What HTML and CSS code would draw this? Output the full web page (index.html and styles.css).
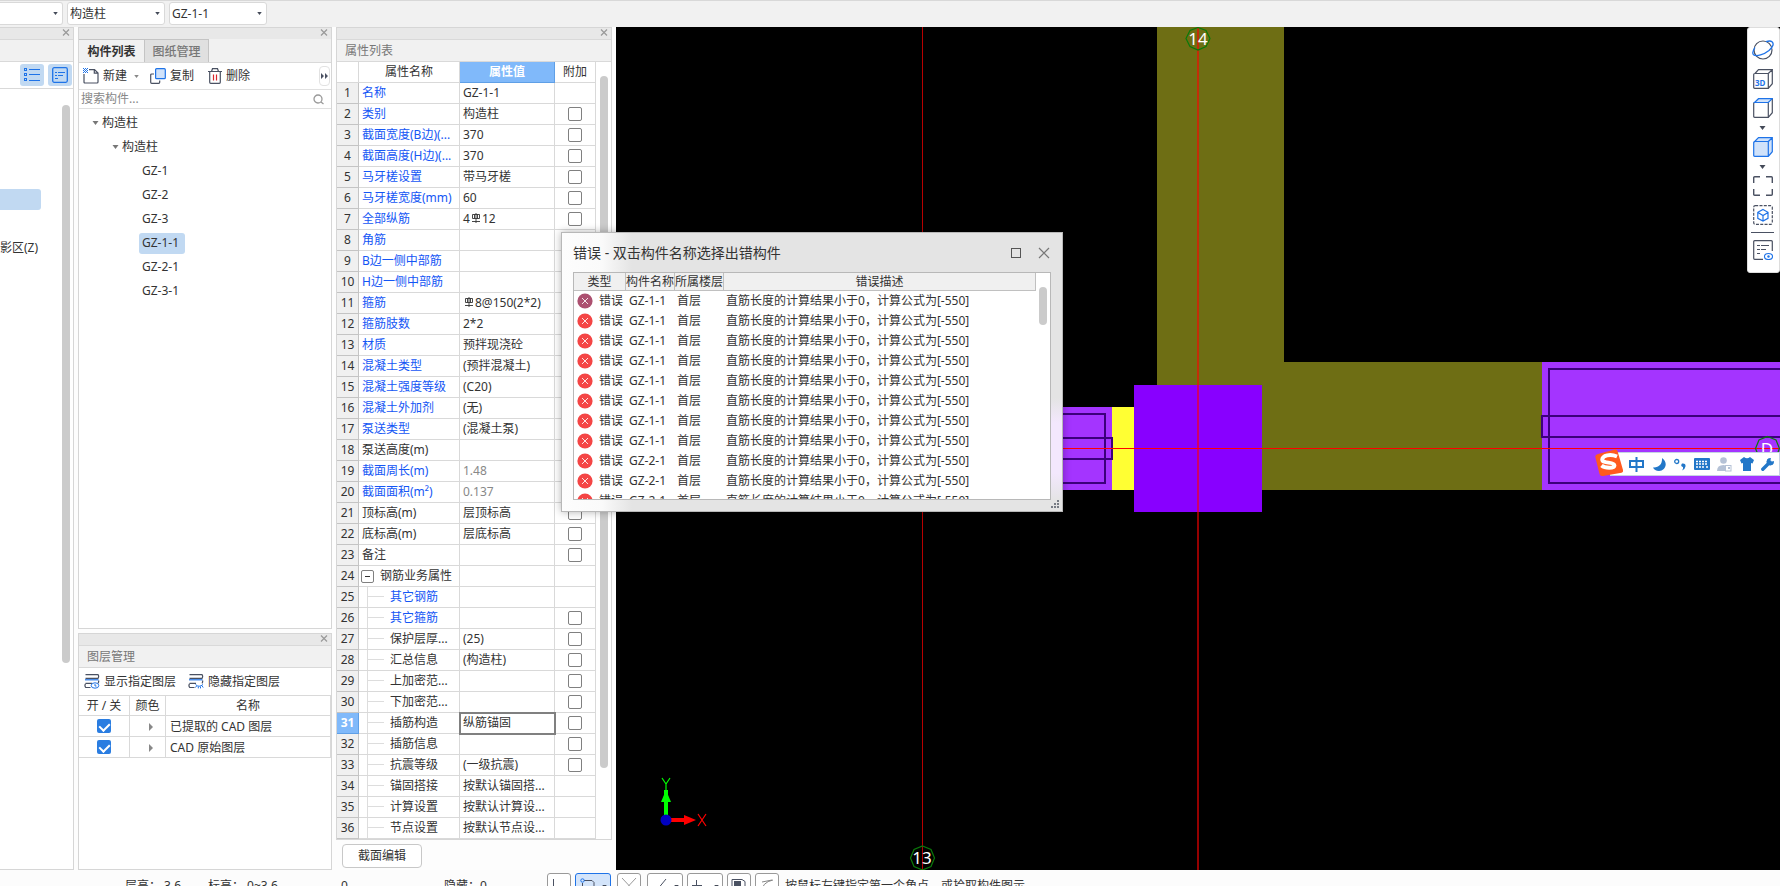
FILE: index.html
```html
<!DOCTYPE html>
<html lang="zh-CN">
<head>
<meta charset="utf-8">
<title>构件属性</title>
<link rel="stylesheet" href="styles.css">
</head>
<body>
<svg class="defs" aria-hidden="true">
  <symbol id="x" viewBox="0 0 8 8"><path d="M1 1l6 6M7 1l-6 6" fill="none" stroke="currentColor" stroke-width="1.2"/></symbol>
  <symbol id="rebar" viewBox="0 0 10 10"><path d="M5 0v10M1 8.500h8M1.500 1.500h7v4h-7zM3.500 1.500v4M6.500 1.500v4" fill="none" stroke="#333" stroke-width=".9"/></symbol>
  <symbol id="err" viewBox="0 0 16 16"><circle cx="8" cy="8" r="7.600" fill="currentColor"/><path d="M5 5l6 6M11 5l-6 6" stroke="#fff" stroke-opacity=".85" fill="none"/></symbol>
  <symbol id="tri" viewBox="0 0 6 4"><path d="M0 0h6L3 4z" fill="currentColor"/></symbol>
  <symbol id="layers" viewBox="0 0 16 15"><g fill="none" stroke="#4a5162" stroke-width="1.200"><path d="M1.500 .7H14q1.300 1.800 0 3.600H1.500M14 9.300q1-1.300.5-2.800M1.500 9.300h6.500M6.500 13.500H1.700Q.3 11.500 1.500 9.800"/></g><path d="M1 5.800h13.500" stroke="#1e73e8" stroke-width="1.200" fill="none"/></symbol>
</svg>

<header class="topbar">
  <span class="combo combo-first"><select aria-label="类型"><option></option></select><svg class="tri"><use href="#tri"/></svg></span>
  <span class="combo"><select aria-label="构件类型"><option>构造柱</option></select><svg class="tri"><use href="#tri"/></svg></span>
  <span class="combo"><select aria-label="构件"><option>GZ-1-1</option></select><svg class="tri"><use href="#tri"/></svg></span>
</header>

<main class="work">
  <section class="panel nav">
    <div class="grip"><button aria-label="关闭"><svg><use href="#x"/></svg></button></div>
    <div class="head"></div>
    <div class="nav-tools">
      <button aria-label="列表"><svg width="16" height="14" viewBox="0 0 16 14" fill="none" stroke="#1e73e8"><rect x=".5" y=".5" width="2" height="2"/><rect x=".5" y="5.500" width="2" height="2"/><rect x=".5" y="10.500" width="2" height="2"/><path d="M5 1.500h11M5 6.500h11M5 12.500h11"/></svg></button>
      <button aria-label="详情"><svg width="16" height="16" viewBox="0 0 16 16" fill="none" stroke="#1e73e8"><rect x=".7" y=".7" width="14.600" height="14.600" rx="1.500" stroke-width="1.300"/><path d="M3 5.500h2M6 5.500h7M3 8.500h2M6 8.500h5M3 11.500h3"/></svg></button>
    </div>
    <div class="nav-body">
      <div class="nav-list"><div class="nav-sel"></div><div class="nav-item">影区(Z)</div></div>
      <div class="nav-track"><div class="thumb"></div></div>
    </div>
  </section>

  <div class="column">
    <section class="panel comps">
      <div class="grip"><button aria-label="关闭"><svg><use href="#x"/></svg></button></div>
      <div class="head tabs"><button class="tab on">构件列表</button><button class="tab">图纸管理</button></div>
      <div class="tools">
        <button><svg width="16" height="16" viewBox="0 0 16 16" fill="none"><path d="M6 1.600h5.500l3.500 3.500v8.900q0 1-1 1H2q-1 0-1-1V6M11.300 1.600v3.600H15" stroke="#4a5162" stroke-width="1.200"/><path d="M0 0h1v1H0zM2 0h1v1H2zM4 0h1v1H4zM1 1h1v1H1zM3 1h1v1H3zM0 2h1v1H0zM2 2h1v1H2zM4 2h1v1H4zM1 3h1v1H1zM3 3h1v1H3zM0 4h1v1H0zM2 4h1v1H2zM4 4h1v1H4z" fill="#1e73e8"/></svg>新建</button>
        <svg class="tri gray"><use href="#tri"/></svg>
        <button class="copy"><svg width="16" height="16" viewBox="0 0 16 16"><rect x="5.600" y=".7" width="9.700" height="10" rx="1" fill="#d0e2fa" stroke="#1e73e8" stroke-width="1.200"/><path d="M4 6H1.700q-1 0-1 1v7.300q0 1 1 1h7q1 0 1-1V12.500" fill="none" stroke="#4a5162" stroke-width="1.200"/></svg>复制</button>
        <button class="del"><svg width="14" height="16" viewBox="0 0 14 16" fill="none"><path d="M0 3.500h14M3.500 3.500L4.500.7h5l1 2.800M1.700 3.500v10.800q0 1 1 1h8.600q1 0 1-1V3.500" stroke="#4a5162" stroke-width="1.200"/><path d="M5.500 6.500v6M8.500 6.500v6" stroke="#d9262c" stroke-width="1.200"/></svg>删除</button>
        <button class="more" aria-label="更多"><svg width="7" height="6" viewBox="0 0 7 6"><path d="M0 0l3 3-3 3zM4 0l3 3-3 3z" fill="#4a5162"/></svg></button>
      </div>
      <div class="search"><input type="text" placeholder="搜索构件..." aria-label="搜索构件"><svg width="11" height="11" viewBox="0 0 11 11" fill="none" stroke="#999" stroke-width="1.300"><circle cx="5" cy="5" r="4"/><path d="M8 8l2.500 2"/></svg></div>
      <ul class="tree">
        <li class="l1"><svg class="tri"><use href="#tri"/></svg>构造柱</li>
        <li class="l2"><svg class="tri"><use href="#tri"/></svg>构造柱</li>
        <li class="l3"><span>GZ-1</span></li>
        <li class="l3"><span>GZ-2</span></li>
        <li class="l3"><span>GZ-3</span></li>
        <li class="l3"><span class="sel">GZ-1-1</span></li>
        <li class="l3"><span>GZ-2-1</span></li>
        <li class="l3"><span>GZ-3-1</span></li>
      </ul>
    </section>
    <section class="panel layers">
      <div class="grip"><button aria-label="关闭"><svg><use href="#x"/></svg></button></div>
      <h2 class="head">图层管理</h2>
      <div class="layer-tools">
        <button><svg width="16" height="15" viewBox="0 0 16 15"><use href="#layers"/><ellipse cx="11" cy="11.500" rx="3.800" ry="2.700" fill="#fff" stroke="#1e73e8"/><path d="M11 10v2h1.500" stroke="#1e73e8" fill="none"/></svg>显示指定图层</button>
        <button><svg width="16" height="15" viewBox="0 0 16 15"><use href="#layers"/><path d="M7.500 10.500q3.500 3.500 7.500 0M8.500 12l-1 1.500M10.300 12.600v1.800M12.500 12.600v1.800M14.200 12l1 1.500" stroke="#1e73e8" fill="none"/></svg>隐藏指定图层</button>
      </div>
      <table class="layer-table">
        <colgroup><col class="c-on"><col class="c-color"><col></colgroup>
        <thead><tr><th>开 / 关</th><th>颜色</th><th>名称</th></tr></thead>
        <tbody>
          <tr><td class="mid"><input type="checkbox" id="ly1" checked></td><td class="mid"><svg class="play" width="4" height="8" viewBox="0 0 4 8"><path d="M0 0l4 4-4 4z" fill="#888"/></svg></td><td><label for="ly1">已提取的 CAD 图层</label></td></tr>
          <tr><td class="mid"><input type="checkbox" id="ly2" checked></td><td class="mid"><svg class="play" width="4" height="8" viewBox="0 0 4 8"><path d="M0 0l4 4-4 4z" fill="#888"/></svg></td><td><label for="ly2">CAD 原始图层</label></td></tr>
        </tbody>
      </table>
    </section>
  </div>

  <div class="props">
    <section class="panel props-panel">
      <div class="grip"><button aria-label="关闭"><svg><use href="#x"/></svg></button></div>
      <h2 class="head">属性列表</h2>
      <div class="props-body">
        <table class="prop-table">
          <colgroup><col class="p-num"><col class="p-name"><col class="p-val"><col class="p-add"></colgroup>
          <thead><tr><th></th><th>属性名称</th><th class="hot">属性值</th><th>附加</th></tr></thead>
          <tbody>
            <tr><th>1</th><td class="b">名称</td><td>GZ-1-1</td><td></td></tr>
            <tr><th>2</th><td class="b">类别</td><td>构造柱</td><td><input type="checkbox" aria-label="附加 类别"></td></tr>
            <tr><th>3</th><td class="b">截面宽度(B边)(...</td><td>370</td><td><input type="checkbox" aria-label="附加 截面宽度"></td></tr>
            <tr><th>4</th><td class="b">截面高度(H边)(...</td><td>370</td><td><input type="checkbox" aria-label="附加 截面高度"></td></tr>
            <tr><th>5</th><td class="b">马牙槎设置</td><td>带马牙槎</td><td><input type="checkbox" aria-label="附加 马牙槎设置"></td></tr>
            <tr><th>6</th><td class="b">马牙槎宽度(mm)</td><td>60</td><td><input type="checkbox" aria-label="附加 马牙槎宽度"></td></tr>
            <tr><th>7</th><td class="b">全部纵筋</td><td>4<svg class="rebar"><use href="#rebar"/></svg>12</td><td><input type="checkbox" aria-label="附加 全部纵筋"></td></tr>
            <tr><th>8</th><td class="b">角筋</td><td></td><td></td></tr>
            <tr><th>9</th><td class="b">B边一侧中部筋</td><td></td><td></td></tr>
            <tr><th>10</th><td class="b">H边一侧中部筋</td><td></td><td></td></tr>
            <tr><th>11</th><td class="b">箍筋</td><td><svg class="rebar"><use href="#rebar"/></svg>8@150(2*2)</td><td></td></tr>
            <tr><th>12</th><td class="b">箍筋肢数</td><td>2*2</td><td></td></tr>
            <tr><th>13</th><td class="b">材质</td><td>预拌现浇砼</td><td></td></tr>
            <tr><th>14</th><td class="b">混凝土类型</td><td>(预拌混凝土)</td><td></td></tr>
            <tr><th>15</th><td class="b">混凝土强度等级</td><td>(C20)</td><td></td></tr>
            <tr><th>16</th><td class="b">混凝土外加剂</td><td>(无)</td><td></td></tr>
            <tr><th>17</th><td class="b">泵送类型</td><td>(混凝土泵)</td><td></td></tr>
            <tr><th>18</th><td>泵送高度(m)</td><td></td><td></td></tr>
            <tr><th>19</th><td class="b">截面周长(m)</td><td class="g">1.48</td><td></td></tr>
            <tr><th>20</th><td class="b">截面面积(m²)</td><td class="g">0.137</td><td></td></tr>
            <tr><th>21</th><td>顶标高(m)</td><td>层顶标高</td><td><input type="checkbox" aria-label="附加 顶标高"></td></tr>
            <tr><th>22</th><td>底标高(m)</td><td>层底标高</td><td><input type="checkbox" aria-label="附加 底标高"></td></tr>
            <tr><th>23</th><td>备注</td><td></td><td><input type="checkbox" aria-label="附加 备注"></td></tr>
            <tr><th>24</th><td class="group"><button class="fold" aria-label="折叠"></button>钢筋业务属性</td><td></td><td></td></tr>
            <tr><th>25</th><td class="sub b">其它钢筋</td><td></td><td></td></tr>
            <tr><th>26</th><td class="sub b">其它箍筋</td><td></td><td><input type="checkbox" aria-label="附加 其它箍筋"></td></tr>
            <tr><th>27</th><td class="sub">保护层厚...</td><td>(25)</td><td><input type="checkbox" aria-label="附加 保护层厚"></td></tr>
            <tr><th>28</th><td class="sub">汇总信息</td><td>(构造柱)</td><td><input type="checkbox" aria-label="附加 汇总信息"></td></tr>
            <tr><th>29</th><td class="sub">上加密范...</td><td></td><td><input type="checkbox" aria-label="附加 上加密范"></td></tr>
            <tr><th>30</th><td class="sub">下加密范...</td><td></td><td><input type="checkbox" aria-label="附加 下加密范"></td></tr>
            <tr><th class="hot">31</th><td class="sub">插筋构造</td><td class="cur">纵筋锚固</td><td><input type="checkbox" aria-label="附加 插筋构造"></td></tr>
            <tr><th>32</th><td class="sub">插筋信息</td><td></td><td><input type="checkbox" aria-label="附加 插筋信息"></td></tr>
            <tr><th>33</th><td class="sub">抗震等级</td><td>(一级抗震)</td><td><input type="checkbox" aria-label="附加 抗震等级"></td></tr>
            <tr><th>34</th><td class="sub">锚固搭接</td><td>按默认锚固搭...</td><td></td></tr>
            <tr><th>35</th><td class="sub">计算设置</td><td>按默认计算设...</td><td></td></tr>
            <tr><th>36</th><td class="sub">节点设置</td><td>按默认节点设...</td><td></td></tr>
            <tr><th></th><td class="sub"></td><td></td><td></td></tr>
          </tbody>
        </table>
        <div class="track"><div class="thumb"></div></div>
      </div>
    </section>
    <div class="props-foot"><button>截面编辑</button></div>
  </div>

  <section class="canvas">
    <svg class="drawing" aria-label="平面图">
      <path d="M541 0h127v335h258v128H541z" fill="#6e6e14"/>
      <rect x="300" y="380" width="196" height="83" fill="#a434ff"/>
      <rect x="496" y="380" width="22" height="83" fill="#ffff33"/>
      <rect x="926" y="335" width="2000" height="128" fill="#a434ff"/>
      <g fill="none" stroke="#3c007c" stroke-width="2">
        <path d="M300 387h189v69H300M300 411h196v21H300"/>
        <path d="M2900 342H933v114h1967M2900 389H926v21h1974"/>
      </g>
      <rect x="518" y="358" width="128" height="127" fill="#8800ff"/>
      <path d="M306.500 0v843" stroke="#b80000"/>
      <path d="M582 0v843" stroke="#f00" stroke-opacity=".58" stroke-width="2"/>
      <path d="M300 421.500h2600" stroke="#f00"/>
      <g fill="none" stroke="#0a7a0a" stroke-width="1.200">
        <path d="M582 0.500l8 3 4 8-4 8-8 3.500-8-3.500-4-8 4-8z"/>
        <path d="M306.500 819l8.500 3.500 3.500 8.500-3.500 8.500-8.500 3.500-8.500-3.500-3.500-8.500 3.500-8.500z"/>
        <path d="M1151.500 409.500l8.500 3.500 3.500 8.500-3.500 8.500-8.500 3.500-8.500-3.500-3.500-8.500 3.500-8.500z"/>
      </g>
      <g class="axis-no"><text x="582" y="18">14</text><text x="306" y="837">13</text><text x="1151" y="428">D</text></g>
      <path d="M50 790v-27" stroke="#0f0" stroke-width="4"/><path d="M50 763l-5 12h10z" fill="#0f0"/>
      <path d="M54 793h18" stroke="#f00" stroke-width="4"/><path d="M80 793l-12-5v10z" fill="#f00"/>
      <circle cx="50" cy="793" r="5.500" fill="#0000c0"/>
      <path d="M46 751l4 6 4-6M50 757v6" stroke="#0f0" fill="none" stroke-width="1.200"/>
      <path d="M82 787l8 12M90 787l-8 12" stroke="#f00" fill="none" stroke-width="1.200"/>
    </svg>

    <nav class="viewbar">
      <button aria-label="动态观察"><svg width="22" height="20" viewBox="0 0 22 20" fill="none"><circle cx="11" cy="10" r="9" stroke="#4a5162" stroke-width="1.200"/><path d="M3 7.500Q-.5 12.500 1.500 14.800C4.500 17 12 14.500 17 10.500 21.500 6.500 22 3.500 20 1.700 18.500.5 15.500 1.200 14 1.700" stroke="#1e73e8" stroke-width="1.300"/></svg></button>
      <button aria-label="三维"><svg width="20" height="20" viewBox="0 0 20 20" fill="none"><path d="M.7 5.500q0-1 1-1h13.600v14.800H1.700q-1 0-1-1zM2 4.500L5.500.7h13.800L15.300 4.500M19.300.7v14l-4 4.600" stroke="#4a5162" stroke-width="1.200"/><text x="2" y="17" class="t3d">3D</text></svg></button>
      <button aria-label="俯视"><svg width="20" height="20" viewBox="0 0 20 20" fill="none"><path d="M.7 5.500q0-1 1-1h13.600v14.800H1.700q-1 0-1-1zM19.300.7v14l-4 4.600" stroke="#4a5162" stroke-width="1.200"/><path d="M1.500 4.500L5.500.7h13.800L15.300 4.500z" fill="#d0e2fa" stroke="#1e73e8" stroke-width="1.200"/></svg></button>
      <svg class="tri"><use href="#tri"/></svg>
      <button aria-label="实体"><svg width="20" height="20" viewBox="0 0 20 20"><path d="M.7 5.500L5.500.7h13.800v14l-4 4.600H1.700q-1 0-1-1zM.7 4.500h14.600v14.800M15.300 4.500L19.300.7" fill="#d0e2fa" stroke="#1e73e8" stroke-width="1.200"/></svg></button>
      <svg class="tri"><use href="#tri"/></svg>
      <button aria-label="全屏"><svg width="20" height="20" viewBox="0 0 20 20" fill="none" stroke="#4a5162" stroke-width="1.400"><path d="M.7 7V1.700q0-1 1-1H7M13 .7h5.300q1 0 1 1V7M19.300 13v5.300q0 1-1 1H13M7 19.300H1.700q-1 0-1-1V13"/></svg></button>
      <button aria-label="局部三维"><svg width="20" height="20" viewBox="0 0 20 20" fill="none"><rect x=".7" y=".7" width="18.600" height="18.600" rx="1.500" stroke="#4a5162" stroke-width="1.200" stroke-dasharray="3 1.300"/><path d="M10 4.500l5 2.800v6L10 16l-5.200-2.700v-6zM5 7.500l5 3 5-3M10 10.500V16" stroke="#1e73e8" stroke-width="1.200"/></svg></button>
      <hr>
      <button aria-label="显示设置"><svg width="20" height="20" viewBox="0 0 20 20" fill="none"><path d="M19.300 11V1.700q0-1-1-1H1.700q-1 0-1 1v16.600q0 1 1 1H10M4 5.500h3M8 5.500h8M4 9.500h3M8 9.500h5M4 13.500h3" stroke="#4a5162" stroke-width="1.200"/><ellipse cx="15.500" cy="16.500" rx="4" ry="3" stroke="#1e73e8" stroke-width="1.100"/><circle cx="15.500" cy="16.500" r="1.200" fill="#1e73e8"/></svg></button>
    </nav>

    <div class="ime">
      <svg class="ime-logo" viewBox="0 0 28 28"><path d="M3 5L20 .5q2-.5 2.500 1.500L28 21q.5 2-1.500 2.700L8 27q-3 .5-3.500-2L.3 8Q0 5.700 3 5z" fill="#ff5a1f"/><path d="M22 7.500C15 4.500 7.500 6.500 7.200 10.500 7 15 19.500 12.500 19.500 16.500 19.300 19.500 10 19.500 6.500 16.500" fill="none" stroke="#fff" stroke-width="3.800"/></svg>
      <svg width="15" height="15" viewBox="0 0 15 15" fill="none" stroke="#2277c8" stroke-width="2"><path d="M1 4h13v6H1zM7.500 0v15"/></svg>
      <svg width="15" height="15" viewBox="0 0 15 15"><path d="M10 1C17 6 13 14 7 14 4 14 2 12.500 1 10.500 7 11 10.500 7 10 1z" fill="#2277c8"/></svg>
      <svg width="12" height="13" viewBox="0 0 12 13"><circle cx="2.700" cy="3.500" r="2" fill="none" stroke="#2277c8" stroke-width="1.300"/><path d="M8 5.500q4-.5 3.500 3-.5 3-3.500 4 1.500-2 1-3.500Q6 8 8 5.500z" fill="#2277c8"/></svg>
      <svg width="16" height="12" viewBox="0 0 16 12"><rect width="16" height="12" rx="1" fill="#2277c8"/><path d="M2 3.500h12M2 6h12M2 9h2M5 9h6M12 9h2" stroke="#fff" stroke-width="1.300" stroke-dasharray="2 1"/></svg>
      <svg width="15" height="15" viewBox="0 0 15 15" fill="#b5c2d6"><circle cx="6.500" cy="3.500" r="3.300"/><path d="M0 14q0-6 6.500-6 5 0 5.500 6z"/><rect x="8.500" y="8.500" width="5.500" height="5.500" fill="#fff" stroke="#b5c2d6"/><path d="M11 10h2v2h-2z"/></svg>
      <svg width="14" height="14" viewBox="0 0 14 14"><path d="M4 0q3 2.500 6 0l4 3-1.500 3.500L11 6v8H3V6l-1.500.5L0 3z" fill="#2277c8"/></svg>
      <svg width="14" height="14" viewBox="0 0 14 14"><path d="M1.800 12.200L9 5" stroke="#2277c8" stroke-width="3.400" stroke-linecap="round"/><path d="M12.500 4.500A3.300 3.300 0 119.500 1.500L8.500 4l1.500 1.500z" fill="#2277c8" stroke="#2277c8"/></svg>
    </div>
  </section>

  <section class="dialog" role="dialog" aria-labelledby="dlg-title">
    <div class="dlg-head">
      <h1 id="dlg-title">错误 - 双击构件名称选择出错构件</h1>
      <button aria-label="最大化"><svg width="10" height="10" viewBox="0 0 10 10"><rect x=".5" y=".5" width="9" height="9" fill="none" stroke="#555"/></svg></button>
      <button aria-label="关闭"><svg width="12" height="12" viewBox="0 0 12 12"><path d="M1 1l10 10M11 1L1 11" stroke="#777" stroke-width="1.200"/></svg></button>
    </div>
    <div class="dlg-body">
      <table>
        <colgroup><col class="e-type"><col class="e-name"><col class="e-name"><col></colgroup>
        <thead><tr><th>类型</th><th>构件名称</th><th>所属楼层</th><th>错误描述</th></tr></thead>
        <tbody>
          <tr><td class="hit"><svg><use href="#err"/></svg>错误</td><td>GZ-1-1</td><td>首层</td><td>直筋长度的计算结果小于0，计算公式为[-550]</td></tr>
          <tr><td><svg><use href="#err"/></svg>错误</td><td>GZ-1-1</td><td>首层</td><td>直筋长度的计算结果小于0，计算公式为[-550]</td></tr>
          <tr><td><svg><use href="#err"/></svg>错误</td><td>GZ-1-1</td><td>首层</td><td>直筋长度的计算结果小于0，计算公式为[-550]</td></tr>
          <tr><td><svg><use href="#err"/></svg>错误</td><td>GZ-1-1</td><td>首层</td><td>直筋长度的计算结果小于0，计算公式为[-550]</td></tr>
          <tr><td><svg><use href="#err"/></svg>错误</td><td>GZ-1-1</td><td>首层</td><td>直筋长度的计算结果小于0，计算公式为[-550]</td></tr>
          <tr><td><svg><use href="#err"/></svg>错误</td><td>GZ-1-1</td><td>首层</td><td>直筋长度的计算结果小于0，计算公式为[-550]</td></tr>
          <tr><td><svg><use href="#err"/></svg>错误</td><td>GZ-1-1</td><td>首层</td><td>直筋长度的计算结果小于0，计算公式为[-550]</td></tr>
          <tr><td><svg><use href="#err"/></svg>错误</td><td>GZ-1-1</td><td>首层</td><td>直筋长度的计算结果小于0，计算公式为[-550]</td></tr>
          <tr><td><svg><use href="#err"/></svg>错误</td><td>GZ-2-1</td><td>首层</td><td>直筋长度的计算结果小于0，计算公式为[-550]</td></tr>
          <tr><td><svg><use href="#err"/></svg>错误</td><td>GZ-2-1</td><td>首层</td><td>直筋长度的计算结果小于0，计算公式为[-550]</td></tr>
          <tr><td><svg><use href="#err"/></svg>错误</td><td>GZ-2-1</td><td>首层</td><td>直筋长度的计算结果小于0，计算公式为[-550]</td></tr>
        </tbody>
      </table>
      <div class="dlg-track"><div class="thumb"></div></div>
    </div>
    <svg class="resize" width="8" height="8" viewBox="0 0 8 8"><path d="M6 0h2v2H6zM3 3h2v2H3zM6 3h2v2H6zM0 6h2v2H0zM3 6h2v2H3zM6 6h2v2H6z" fill="#777c84"/></svg>
  </section>
</main>

<footer class="status">
  <div class="status-in">
    <span class="s1">层高： 3.6</span><span class="s2">标高： 0~3.6</span><span class="s3">0</span><span class="s4">隐藏：0</span>
    <div class="snap">
      <button aria-label="正交"><svg width="16" height="16" viewBox="0 0 16 16" fill="none" stroke="#4a5162"><path d="M2.500 1v13H15"/></svg></button>
      <button class="wide on" aria-label="矩形"><svg width="16" height="16" viewBox="0 0 16 16" fill="none" stroke="#4a5162"><path d="M4 2.500h8l2 2V14M2.500 5v9"/><circle cx="2.500" cy="2.500" r="1.700" stroke="#1e73e8"/></svg><svg class="tri"><use href="#tri"/></svg></button>
      <button class="gap" aria-label="交点"><svg width="16" height="16" viewBox="0 0 16 16" fill="none" stroke="#999"><path d="M1 0l14 15M15 0L1 15"/></svg></button>
      <button class="wide gap" aria-label="垂点"><svg width="16" height="16" viewBox="0 0 16 16" fill="none" stroke="#4a5162"><path d="M2 9l3 3 9-11"/></svg><svg class="tri"><use href="#tri"/></svg></button>
      <button class="wide" aria-label="偏移"><svg width="16" height="16" viewBox="0 0 16 16" fill="none" stroke="#4a5162"><path d="M0 7.500h10M4.500 2v12"/></svg><svg class="tri"><use href="#tri"/></svg></button>
      <button aria-label="截图"><svg width="16" height="16" viewBox="0 0 16 16"><path d="M3 3h7v11H3z" fill="#4a5162"/><path d="M1 14V1.500h10l3 2V14" fill="none" stroke="#4a5162"/></svg></button>
      <button aria-label="弧线"><svg width="16" height="16" viewBox="0 0 16 16" fill="none" stroke="#888"><path d="M2 15Q3 4 14 2M3 4l10-2"/></svg></button>
    </div>
    <span>按鼠标左键指定第一个角点，或拾取构件图示</span>
  </div>
</footer>
</body>
</html>
```
FILE: styles.css
```css
* { box-sizing: border-box; }
html, body { height: 100%; }
body {
  margin: 0;
  display: flex;
  flex-direction: column;
  overflow: hidden;
  background: #fdfdfd;
  color: #333;
  font: 12px/20px "Noto Sans", "Noto Sans CJK SC", sans-serif;
}
button, input, select { font: inherit; color: inherit; margin: 0; }
button { padding: 0; border: 0; background: none; display: inline-flex; align-items: center; justify-content: center; }
h1, h2 { margin: 0; font-weight: 400; }
table { border-collapse: separate; border-spacing: 0; table-layout: fixed; }
th { font-weight: 400; }
.defs { position: absolute; width: 0; height: 0; }
.tri { width: 5px; height: 3px; color: #444a58; flex: none; }
.thumb { width: 8px; background: #cbcbcb; border-radius: 4px; }

/* top bar */
.topbar { flex: none; height: 27px; display: flex; gap: 4px; padding-top: 1px; background: #f1f1f1; border-top: 1px solid #d8d8d8; }
.combo { position: relative; width: 98px; height: 23px; }
.combo-first { width: 63px; }
.combo select { appearance: none; width: 100%; height: 100%; padding: 0 2px; border: 1px solid #d9d9d9; border-radius: 3px; background: #fff; }
.combo-first select { border-left: 0; border-radius: 0 3px 3px 0; }
.combo .tri { position: absolute; right: 5px; top: 10px; }

/* panels */
.work { flex: 1; min-height: 0; display: flex; gap: 4px; position: relative; }
.panel { display: flex; flex-direction: column; border: 1px solid #d6d6d6; background: #fff; min-height: 0; }
.grip { flex: none; height: 11px; background: #e8e8e8; display: flex; justify-content: flex-end; padding-right: 3px; color: #999; }
.grip button, .grip svg { width: 8px; height: 9px; }
.head { flex: none; height: 23px; background: #f1f1f1; border: solid #d9d9d9; border-width: 1px 0; padding-left: 8px; font-size: 12px; line-height: 21px; color: #777; }

.nav { flex: none; width: 74px; border-left: 0; }
.nav-tools { flex: none; height: 27px; display: flex; justify-content: flex-end; gap: 4px; padding: 2px 1px 3px 0; border-bottom: 1px solid #d9d9d9; }
.nav-tools button { width: 24px; height: 22px; background: #c1d9f2; border-radius: 3px; }
.nav-body { flex: 1; display: flex; justify-content: space-between; }
.nav-list { padding-top: 100px; }
.nav-sel { width: 41px; height: 21px; background: #c1d9f2; border-radius: 0 3px 3px 0; }
.nav-item { margin-top: 28px; white-space: nowrap; }
.nav-track { padding: 16px 3px 0 0; }
.nav-track .thumb { height: 558px; }

.column { flex: none; width: 254px; display: flex; flex-direction: column; gap: 4px; }
.comps { flex: 603; }
.layers { flex: 236; }

/* component list */
.tabs { display: flex; padding: 0; height: 24px; border-top: 0; }
.tab { width: 65px; height: 23px; border: 1px solid #c4c4c4; border-bottom-width: 0; color: #777; background: #e0e0e0; font-weight: 500; }
.tab.on { background: #f1f1f1; color: #333; border-left: 0; border-right: 0; font-weight: 700; }
.tools { flex: none; height: 27px; display: flex; align-items: center; padding: 0 1px 0 4px; border-bottom: 1px solid #e0e0e0; }
.tools button { gap: 4px; }
.tools .tri { margin: 0 11px 0 7px; color: #888; }
.tools .del { margin-left: 14px; }
.tools .more { margin-left: auto; width: 11px; height: 20px; border: 1px solid #e2e2e2; border-radius: 4px; }
.search { flex: none; height: 19px; display: flex; align-items: center; padding: 0 7px 0 2px; border-bottom: 1px solid #e0e0e0; }
.search input { flex: 1; min-width: 0; height: 18px; padding: 0; border: 0; outline: 0; }
.search input::placeholder { color: #888; opacity: 1; }
.tree { margin: 0; padding: 2px 0 0; list-style: none; }
.tree li { height: 24px; display: flex; align-items: center; gap: 3px; }
.tree .tri { width: 7px; height: 4px; color: #777; }
.tree .l1 { padding-left: 13px; }
.tree .l2 { padding-left: 33px; }
.tree .l3 { padding-left: 60px; }
.tree span { padding: 0 3px; height: 21px; line-height: 20px; border-radius: 3px; }
.tree .sel { background: #c1d9f2; padding-right: 6px; }

/* layer manager */
.layer-tools { flex: none; height: 27px; display: flex; align-items: center; gap: 12px; padding-left: 5px; }
.layer-tools button { gap: 4px; }
.layer-table { width: 100%; border-top: 1px solid #d9d9d9; }
.layer-table th, .layer-table td { height: 21px; padding: 0 0 0 4px; border: solid #d9d9d9; border-width: 0 1px 1px 0; line-height: 19px; }
.layer-table thead th { height: 20px; padding: 0; }
.layer-table td.mid { padding: 0; text-align: center; }
.c-on { width: 51px; }
.c-color { width: 36px; }
.play { display: inline-block; margin-left: 6px; }
input[type=checkbox] { appearance: none; display: block; width: 14px; height: 14px; margin: 0 auto; border: 1px solid #808080; border-radius: 2px; background: #fff; }
input[type=checkbox]:checked { border: 0; background: #2a7de1; position: relative; }
input[type=checkbox]:checked::after { content: ""; position: absolute; left: 4px; top: 2px; width: 5px; height: 8px; border: solid #fff; border-width: 0 2px 2px 0; transform: rotate(45deg); }

/* properties */
.props { flex: none; width: 276px; display: flex; flex-direction: column; }
.props-panel { flex: 1; }
.props-body { flex: 1; min-height: 0; overflow: hidden; display: flex; }
.prop-table { flex: none; width: 259px; align-self: flex-start; }
.p-num { width: 22px; }
.p-name { width: 101px; }
.p-val { width: 95px; }
.p-add { width: 41px; }
.prop-table th, .prop-table td { height: 21px; padding: 0 0 0 3px; border: solid #d9d9d9; border-width: 0 1px 1px 0; line-height: 20px; white-space: nowrap; overflow: hidden; }
.prop-table th { padding: 0; }
.prop-table tbody th { background: #f0f0f0; border-color: #c4c4c4; }
.prop-table td:last-child { padding: 0; }
.prop-table .b { color: #1456f5; }
.prop-table .g { color: #888; }
.prop-table th.hot, .prop-table tbody th.hot { background: #80b9fa; color: #fff; border-color: #5f9fe6; font-weight: 700; }
.prop-table .cur { outline: 2px solid #808080; outline-offset: -1px; }
.rebar { width: 10px; height: 10px; margin: 0 1px; vertical-align: 0; }
.prop-table .sub { padding-left: 31px; background: linear-gradient(#ddd, #ddd) 8px 9px / 17px 1px no-repeat, linear-gradient(#ddd, #ddd) 8px 0 / 1px 100% no-repeat; }
.prop-table .group { padding-left: 2px; }
.fold { width: 13px; height: 13px; margin-right: 6px; border: 1px solid #808080; border-radius: 2px; vertical-align: middle; }
.fold::before { content: ""; width: 5px; height: 1px; background: #333; }
.track { padding: 14px 0 0 4px; }
.track .thumb { height: 692px; }
.props-foot { flex: none; height: 30px; padding: 4px 6px; }
.props-foot button { width: 80px; height: 24px; border: 1px solid #c8c8c8; border-radius: 4px; background: #fff; }

/* model view */
.canvas { flex: 1; min-width: 0; position: relative; overflow: hidden; background: #000; }
.drawing { display: block; width: 100%; height: 100%; }
.axis-no { fill: #fff; font-size: 17px; text-anchor: middle; }
.t3d { fill: #1e73e8; font-size: 8px; font-weight: 700; }
.viewbar { position: absolute; right: 0; top: 0; width: 33px; height: 246px; display: flex; flex-direction: column; align-items: center; gap: 9px; padding: 12px 2px 0 0; background: #fff; border: 1px solid #ddd; border-radius: 3px; }
.viewbar button { height: 20px; }
.viewbar .tri { width: 7px; height: 4px; margin: -1px 0 -4px; }
.viewbar .tri + button { margin-top: 2px; }
.viewbar hr { width: 23px; height: 1px; margin: -2px 0; border: 0; background: #4a5162; }
.ime { position: absolute; right: 0; top: 425px; width: 170px; height: 24px; display: flex; align-items: center; justify-content: space-between; padding: 0 4px 0 19px; background: #fff; border: solid #c5d3e3; border-width: 1px 1px 1px 0; }
.ime-logo { position: absolute; left: -15px; top: -4px; width: 28px; height: 28px; }

/* error dialog */
.dialog {
  position: absolute; left: 561px; top: 205px; width: 502px; height: 280px;
  display: flex; flex-direction: column;
  padding: 0 11px 11px;
  border: 1px solid #b8b8b8;
  background:
    linear-gradient(transparent 165px, #f3e8fd 190px, #f3e8fd 240px, transparent 268px) right / 12px 100% no-repeat,
    linear-gradient(90deg, #fdfdfd, #fafafa 40px, #e4e4e4 70px);
  box-shadow: 0 0 8px rgba(0, 0, 0, .3);
}
.dlg-head { flex: none; height: 39px; display: flex; align-items: center; gap: 17px; }
.dlg-head h1 { flex: 1; font-size: 14px; }
.dlg-head button:last-child { margin-right: 1px; }
.dlg-body { flex: 1; min-height: 0; overflow: hidden; display: flex; background: #fff; border: 1px solid #b8b8b8; }
.dlg-body table { flex: 1; align-self: flex-start; }
.e-type { width: 52px; }
.e-name { width: 48px; }
.dlg-body th { height: 18px; padding: 0; line-height: 17px; background: #f0f0f0; border: solid #c0c0c0; border-width: 0 1px 1px 0; white-space: nowrap; }
.dlg-body td { height: 20px; padding: 0 0 0 3px; line-height: 20px; white-space: nowrap; }
.dlg-body td:nth-child(n+3) { padding-left: 2px; }
.dlg-body td svg { width: 16px; height: 16px; margin-right: 6px; vertical-align: -4px; color: #f44545; }
.dlg-body td.hit svg { color: #ac5070; }
.dlg-track { flex: none; width: 14px; padding: 14px 0 0 3px; }
.dlg-track .thumb { height: 38px; }
.resize { position: absolute; right: 3px; bottom: 3px; }

/* status bar */
.status { flex: none; height: 16px; overflow: hidden; background: #fcfcfc; }
.status-in { display: flex; height: 32px; align-items: center; padding-left: 125px; white-space: nowrap; }
.s1 { width: 83px; }
.s2 { width: 133px; }
.s3 { width: 103px; }
.s4 { width: 103px; }
.snap { display: flex; gap: 4px; margin-right: 6px; }
.snap button { width: 24px; height: 26px; border: 1px solid #999; border-radius: 3px; background: #fff; }
.snap .wide { width: 36px; gap: 6px; }
.snap .on { background: #d3e4fa; border-color: #1e73e8; }
.snap .gap { margin-left: 2px; }
```
